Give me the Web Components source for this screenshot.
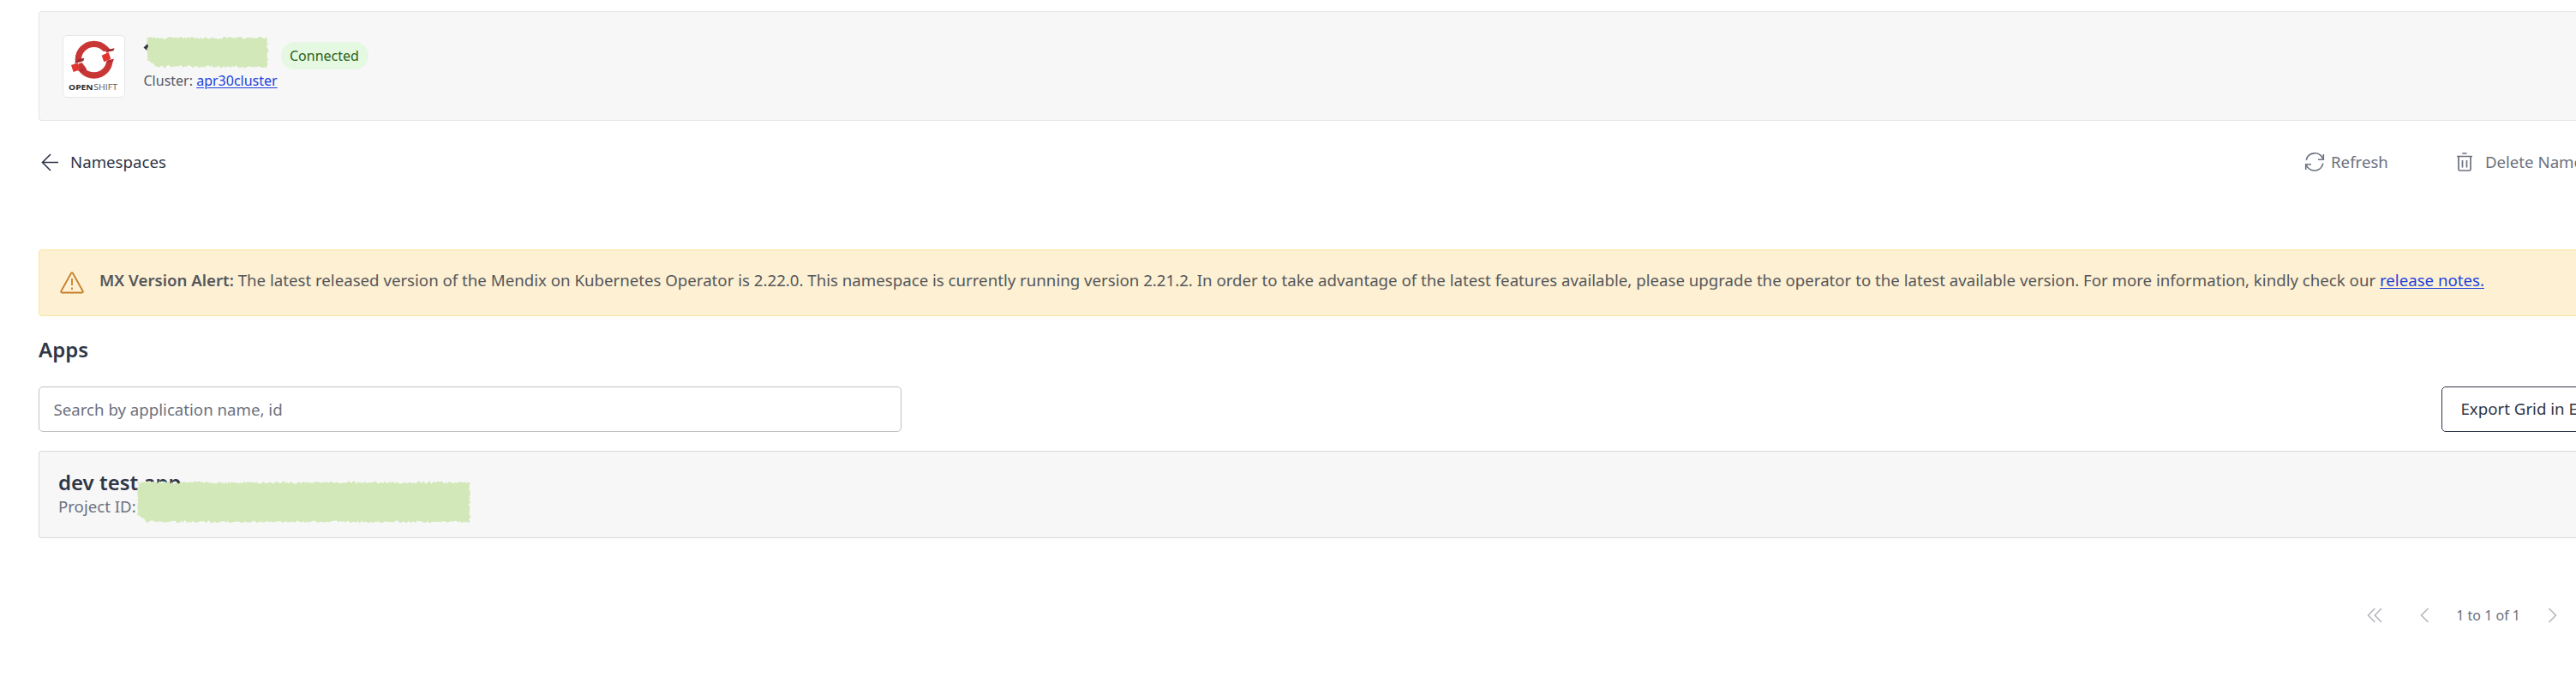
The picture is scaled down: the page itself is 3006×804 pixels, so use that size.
<!DOCTYPE html>
<html lang="en">
<head>
<meta charset="utf-8">
<title>Namespace apps</title>
<style>
html,body{margin:0;background:#fff}
body{font-family:"Noto Sans","Open Sans",sans-serif;font-size:18.667px;line-height:26px;color:#2f3646;width:3006px;height:804px;overflow:hidden}
</style>
</head>
<body>
<namespace-page></namespace-page>
<script>
const define = (name, html, setup) => {
  const t = document.createElement('template');
  t.innerHTML = html;
  customElements.define(name, class extends HTMLElement {
    constructor() {
      super();
      this.attachShadow({mode: 'open'}).append(t.content.cloneNode(true));
    }
    connectedCallback() { if (setup) setup(this); }
  });
};

/* Rough-edged block that hides private values */
define('redaction-patch', `
<style>:host{display:block;pointer-events:none}svg{display:block;overflow:visible}path{fill:#d2e8b9}</style>
<svg><path/></svg>`, el => {
  const w = +el.getAttribute('w'), h = +el.getAttribute('h');
  let seed = w;
  const r = a => { seed = (seed * 16807) % 2147483647; return (seed / 2147483647 - .5) * a; };
  const pts = [];
  for (let x = 0; x < w; x += 1.7) pts.push([x, 1.2 + r(3.2)]);
  for (let y = 1; y < h; y += 1.7) pts.push([w - 1 + r(2.6), y]);
  for (let x = w - 1; x > 12; x -= 1.7) pts.push([x, h - 1.2 + r(3.2)]);
  pts.push([10, h - 2], [8, h - 5], [5, h - 6], [3, h - 8]);
  for (let y = h - 9; y > 0; y -= 1.7) pts.push([1 + r(2.2), y]);
  const s = el.shadowRoot.querySelector('svg');
  s.setAttribute('width', w); s.setAttribute('height', h);
  s.firstElementChild.setAttribute('d', 'M' + pts.map(p => p.map(v => v.toFixed(1)).join(' ')).join('L') + 'Z');
});

define('openshift-logo', `
<style>
:host{display:block;box-sizing:border-box;width:73px;height:73px;background:#fff;border:1px solid #e6e7e8;border-radius:5px;flex:none}
svg{display:block}text{font-family:"Open Sans",sans-serif;font-size:28px}
</style>
<svg width="71" height="71" viewBox="43 37 213 213">
<circle cx="150" cy="120" r="55" fill="none" stroke="#c93636" stroke-width="22"/>
<path d="M78 134L116 125 122 150 88 162 72 150Z" fill="#fff"/>
<path d="M180 92L222 86 226 118 184 128Z" fill="#fff"/>
<path d="M96 134L108 130 124 152 108 162 98 156Z" fill="#c93636"/>
<path d="M190 84L202 78 206 88 194 96Z" fill="#c93636"/>
<path d="M81 131L94 119 116 114 113 125Z" fill="#9b2a33"/>
<path d="M191 94L200 84 222 80 218 89Z" fill="#9b2a33"/>
<path d="M92 158L105 150 124 152 108 162Z" fill="#b52f35"/>
<path d="M191 132L199 121 220 117 216 128Z" fill="#b52f35"/>
<path d="M70 139L93 131 103 154 78 163Z" fill="#df372f"/>
<path d="M177 105L201 94 209 117 185 128Z" fill="#df372f"/>
<text x="61" y="226" font-weight="700" textLength="86" lengthAdjust="spacingAndGlyphs" fill="#2a2a2a">OPEN</text>
<text x="149" y="226" textLength="83" lengthAdjust="spacingAndGlyphs" fill="#555">SHIFT</text>
</svg>`);

define('status-badge', `
<style>:host{display:block;height:32px;line-height:32px;padding:0 11px 0 10px;border-radius:16px;background:#e5f8e2;color:#2a6318;font-size:16px}</style>
<slot></slot>`);

define('text-link', `
<style>:host{display:inline}a{color:#1d41dc;text-decoration:underline;text-decoration-thickness:1px;text-underline-offset:2px}</style>
<a href="#"><slot></slot></a>`);

define('cluster-header', `
<style>
:host{display:flex;box-sizing:border-box;height:128px;margin-left:45px;padding:27px 0 0 27px;background:#f7f7f7;border:1px solid #e5e6e8;border-right:0;border-radius:4px 0 0 4px}
.info{margin-left:21.5px}
.title{display:flex;height:32px;margin-top:8px;position:relative}
.name{width:160.500px}
redaction-patch{position:absolute;left:3.5px;top:-6px}
.frag{position:absolute;left:-1px;top:0}
.sub{font-size:16px;line-height:22px;margin-top:2px;color:#545968}
</style>
<openshift-logo></openshift-logo>
<div class="info">
 <div class="title"><div class="name"></div><status-badge>Connected</status-badge>
  <svg class="frag" width="12" height="30"><path d="M6 1L.5 6.500 4 9.500 8 5V1Z M7 20h4v2.500H8Z" fill="#2f3646"/></svg>
  <redaction-patch w="142" h="36"></redaction-patch></div>
 <div class="sub">Cluster: <text-link>apr30cluster</text-link></div>
</div>`);

define('tool-bar', `
<style>
:host{display:flex;justify-content:space-between;height:48px;line-height:48px;margin-top:24px;padding-left:48px;color:#2f3646}
div{display:flex;align-items:center;white-space:nowrap}
svg{display:block;fill:none;stroke:currentColor;flex:none}
.back svg{margin-right:13px}
.acts{width:317px;color:#6c717e}
.acts svg:first-child{margin-right:7px}
.trash{margin:0 14px 0 79px}
</style>
<div class="back"><svg width="21" height="22" stroke-width="1.6"><path d="M20 11.5H1.5M11 2L1.5 11.5 11 21"/></svg>Namespaces</div>
<div class="acts">
<svg width="24" height="24" stroke-width="1.6"><path d="M2.2 9.7A10.2 10.2 0 0 1 21.5 8M22.3 3v6.3H16M21.8 13.5A10.2 10.2 0 0 1 2.5 16.2M1.7 21V14.800H8"/></svg><span>Refresh</span>
<svg class="trash" width="20" height="24" stroke-width="1.7"><path d="M1 5.500H19M7.300 2H12.500M3 6V20.500Q3 22 4.500 22H15.500Q17 22 17 20.500V6M7.500 10V18.500M12.500 10V18.500"/></svg><span>Delete Namespace</span>
</div>`);

define('version-alert', `
<style>
:host{display:flex;box-sizing:border-box;height:78px;margin:78px 0 0 45px;padding:22px 0 0 24px;border:1px solid #fbe6a4;border-right:0;border-radius:4px 0 0 4px;background:#fdf0d3;color:#55575b;white-space:nowrap}
svg{display:block;margin:3px 18px 0 0;flex:none}
</style>
<svg width="28" height="26" viewBox="0 0 28 26" fill="none" stroke="#c67e2b" stroke-width="1.8" stroke-linejoin="round"><path d="M13.200 1.500Q14 .6 14.800 1.500L26.800 23Q27 24.500 25.800 24.500H2.200Q1 24.500 1.200 23ZM14 8V16M14 18.500V21"/></svg>
<div><slot></slot></div>`);

define('search-row', `
<style>
:host{display:flex;justify-content:space-between;height:53px;margin:27px 0 0 45px}
input{box-sizing:border-box;width:1007px;height:53px;border:1px solid #c0c1c4;border-radius:5px;padding:0 0 1px 16.500px;margin:0;font:inherit;background:#fff}
input::placeholder{color:#6c717e;opacity:1}
button{box-sizing:border-box;width:220px;margin:0 -63px 0 0;height:53px;border:1px solid #2f3646;border-radius:5px;background:#fff;color:#2f3646;font:inherit;padding:0 0 1px 21.500px;text-align:left;white-space:nowrap}
</style>
<input placeholder="Search by application name, id"><button>Export Grid in Excel</button>`);

define('app-card', `
<style>
:host{display:block;position:relative;box-sizing:border-box;height:102px;margin:22px 0 0 45px;padding:20px 0 0 22px;border:1px solid #d9dadc;border-right:0;border-radius:4px 0 0 4px;background:#f7f7f7}
h3{margin:0;font-size:24px;font-weight:600;line-height:32px}
p{margin:0;line-height:24px;color:#6c717e}
redaction-patch{position:absolute;left:113.500px;top:35px}
</style>
<h3><slot></slot></h3><p>Project ID:</p>
<redaction-patch w="389" h="48"></redaction-patch>`);

define('page-nav', `
<style>
:host{display:flex;align-items:center;justify-content:flex-end;height:32px;margin-top:74px;padding-right:22px;font-size:16px;color:#6c717e}
svg{display:block;fill:none;stroke:#b2b4b9;stroke-width:1.5}
</style>
<svg width="18" height="18"><path d="M9.300 1L1.500 9 9.300 17M17 1L9.200 9 17 17"/></svg>
<svg width="11" height="18" style="margin:0 31px 0 44.500px"><path d="M9.500 1L1.500 9 9.500 17"/></svg>
<span>1 to 1 of 1</span>
<svg width="11" height="18" style="margin-left:32px"><path d="M1.500 1L9.500 9 1.500 17"/></svg>`);

define('namespace-page', `
<style>
:host{display:block;box-sizing:border-box;width:3006px;height:804px;padding-top:13px;overflow:hidden}
h2{margin:23px 0 0 45px;font-size:24px;font-weight:600;line-height:32px}
b{font-weight:600}
</style>
<cluster-header></cluster-header>
<tool-bar></tool-bar>
<version-alert><b>MX Version Alert:</b> The latest released version of the Mendix on Kubernetes Operator is 2.22.0. This namespace is currently running version 2.21.2. In order to take advantage of the latest features available, please upgrade the operator to the latest available version. For more information, kindly check our <text-link>release notes.</text-link></version-alert>
<h2>Apps</h2>
<search-row></search-row>
<app-card>dev test app</app-card>
<page-nav></page-nav>`);
</script>
</body>
</html>
